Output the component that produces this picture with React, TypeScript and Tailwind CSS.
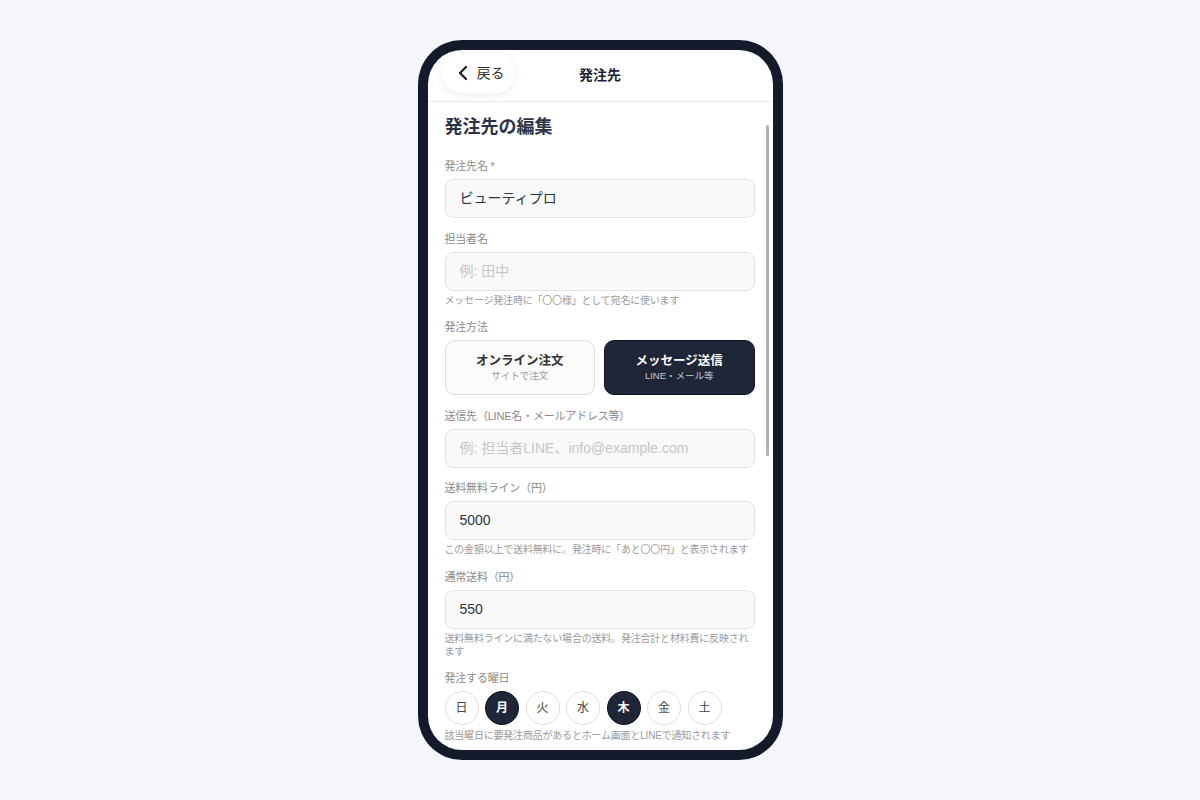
import { ChevronLeft } from 'lucide-react'

const DAYS = [
  { label: '日', on: false },
  { label: '月', on: true },
  { label: '火', on: false },
  { label: '水', on: false },
  { label: '木', on: true },
  { label: '金', on: false },
  { label: '土', on: false },
]

const labelCls = 'block text-[11px] leading-4 text-[#8a8a8a] mb-[5px] tracking-[-0.2px]'
const inputCls = 'w-full h-[39px] rounded-[8px] border border-[#e2e2e2] bg-[#f9f9f9] px-[14px] flex items-center text-[14px]'
const helpCls = 'mt-[3px] text-[10px] leading-[13px] text-[#9a9a9a] tracking-[-0.2px]'

function Field({ label, value, placeholder, help }: { label: string; value?: string; placeholder?: string; help?: string }) {
  return (
    <div>
      <label className={labelCls}>{label}</label>
      <div className={inputCls}>
        {value ? <span className="text-[#2b3445]">{value}</span> : <span className="text-[#c6c6c6]">{placeholder}</span>}
      </div>
      {help && <p className={helpCls}>{help}</p>}
    </div>
  )
}

export default function App() {
  return (
    <div
      className="w-[1200px] h-[800px] bg-[#f4f6f9] flex items-center justify-center"
      style={{ fontFamily: '"Liberation Sans", "Noto Sans CJK JP", sans-serif' }}
    >
      <div className="w-[365px] h-[720px] rounded-[44px] bg-[#121a2c] p-[10px]">
        <div className="w-full h-full rounded-[34px] bg-white overflow-hidden flex flex-col">
          {/* header */}
          <div className="relative h-[52px] shrink-0 border-b border-[#ececec] flex items-center justify-center">
            <div className="absolute left-[14px] top-[3px] h-[40px] w-[73px] rounded-full bg-white shadow-[0_2px_10px_rgba(0,0,0,0.08)] flex items-center pl-[9px] gap-[2px]">
              <ChevronLeft className="w-[24px] h-[24px] text-[#222]" strokeWidth={2.3} />
              <span className="text-[14px] text-[#333]">戻る</span>
            </div>
            <span className="text-[14px] font-bold text-[#1d2333]">発注先</span>
          </div>

          {/* body */}
          <div className="relative flex-1 overflow-hidden">
            <div className="absolute right-[4px] top-[23px] w-[3px] h-[331px] rounded-full bg-[#b3b3b3]" />
            <div className="pl-[17px] pr-[18px] pt-[13px]">
              <h1 className="text-[18px] leading-[24px] font-bold text-[#2b3445] mb-[19px]">発注先の編集</h1>

              <div className="flex flex-col gap-[12.5px]">
                <Field label="発注先名 *" value="ビューティプロ" />
                <Field label="担当者名" placeholder="例: 田中" help="メッセージ発注時に「〇〇様」として宛名に使います" />

                <div>
                  <label className={labelCls}>発注方法</label>
                  <div className="grid grid-cols-2 gap-[9px]">
                    <div className="h-[55px] rounded-[10px] border-[1.5px] border-[#dcdcdc] bg-[#fbfbfb] flex flex-col items-center justify-center">
                      <span className="text-[12.5px] leading-[16px] font-bold text-[#333]">オンライン注文</span>
                      <span className="text-[9.5px] leading-[13px] text-[#999]">サイトで注文</span>
                    </div>
                    <div className="h-[55px] rounded-[10px] border-[1.5px] border-[#0d1220] bg-[#1f2638] flex flex-col items-center justify-center">
                      <span className="text-[12.5px] leading-[16px] font-bold text-white">メッセージ送信</span>
                      <span className="text-[9.5px] leading-[13px] text-[#c3c8d2]">LINE・メール等</span>
                    </div>
                  </div>
                </div>

                <Field label="送信先（LINE名・メールアドレス等）" placeholder="例: 担当者LINE、info@example.com" />
                <Field label="送料無料ライン（円）" value="5000" help="この金額以上で送料無料に。発注時に「あと〇〇円」と表示されます" />
                <Field label="通常送料（円）" value="550" help="送料無料ラインに満たない場合の送料。発注合計と材料費に反映されます" />

                <div>
                  <label className={labelCls}>発注する曜日</label>
                  <div className="flex gap-[6.5px]">
                    {DAYS.map((d) => (
                      <div
                        key={d.label}
                        className={
                          d.on
                            ? 'w-[34px] h-[34px] rounded-full bg-[#1f2638] border-[1.5px] border-[#0d1220] flex items-center justify-center text-[12px] font-bold text-white'
                            : 'w-[34px] h-[34px] rounded-full bg-white border-[1.5px] border-[#dedede] flex items-center justify-center text-[12px] text-[#444]'
                        }
                      >
                        {d.label}
                      </div>
                    ))}
                  </div>
                  <p className={helpCls + ' mt-[4px]'}>該当曜日に要発注商品があるとホーム画面とLINEで通知されます</p>
                </div>
              </div>
            </div>
          </div>
        </div>
      </div>
    </div>
  )
}
